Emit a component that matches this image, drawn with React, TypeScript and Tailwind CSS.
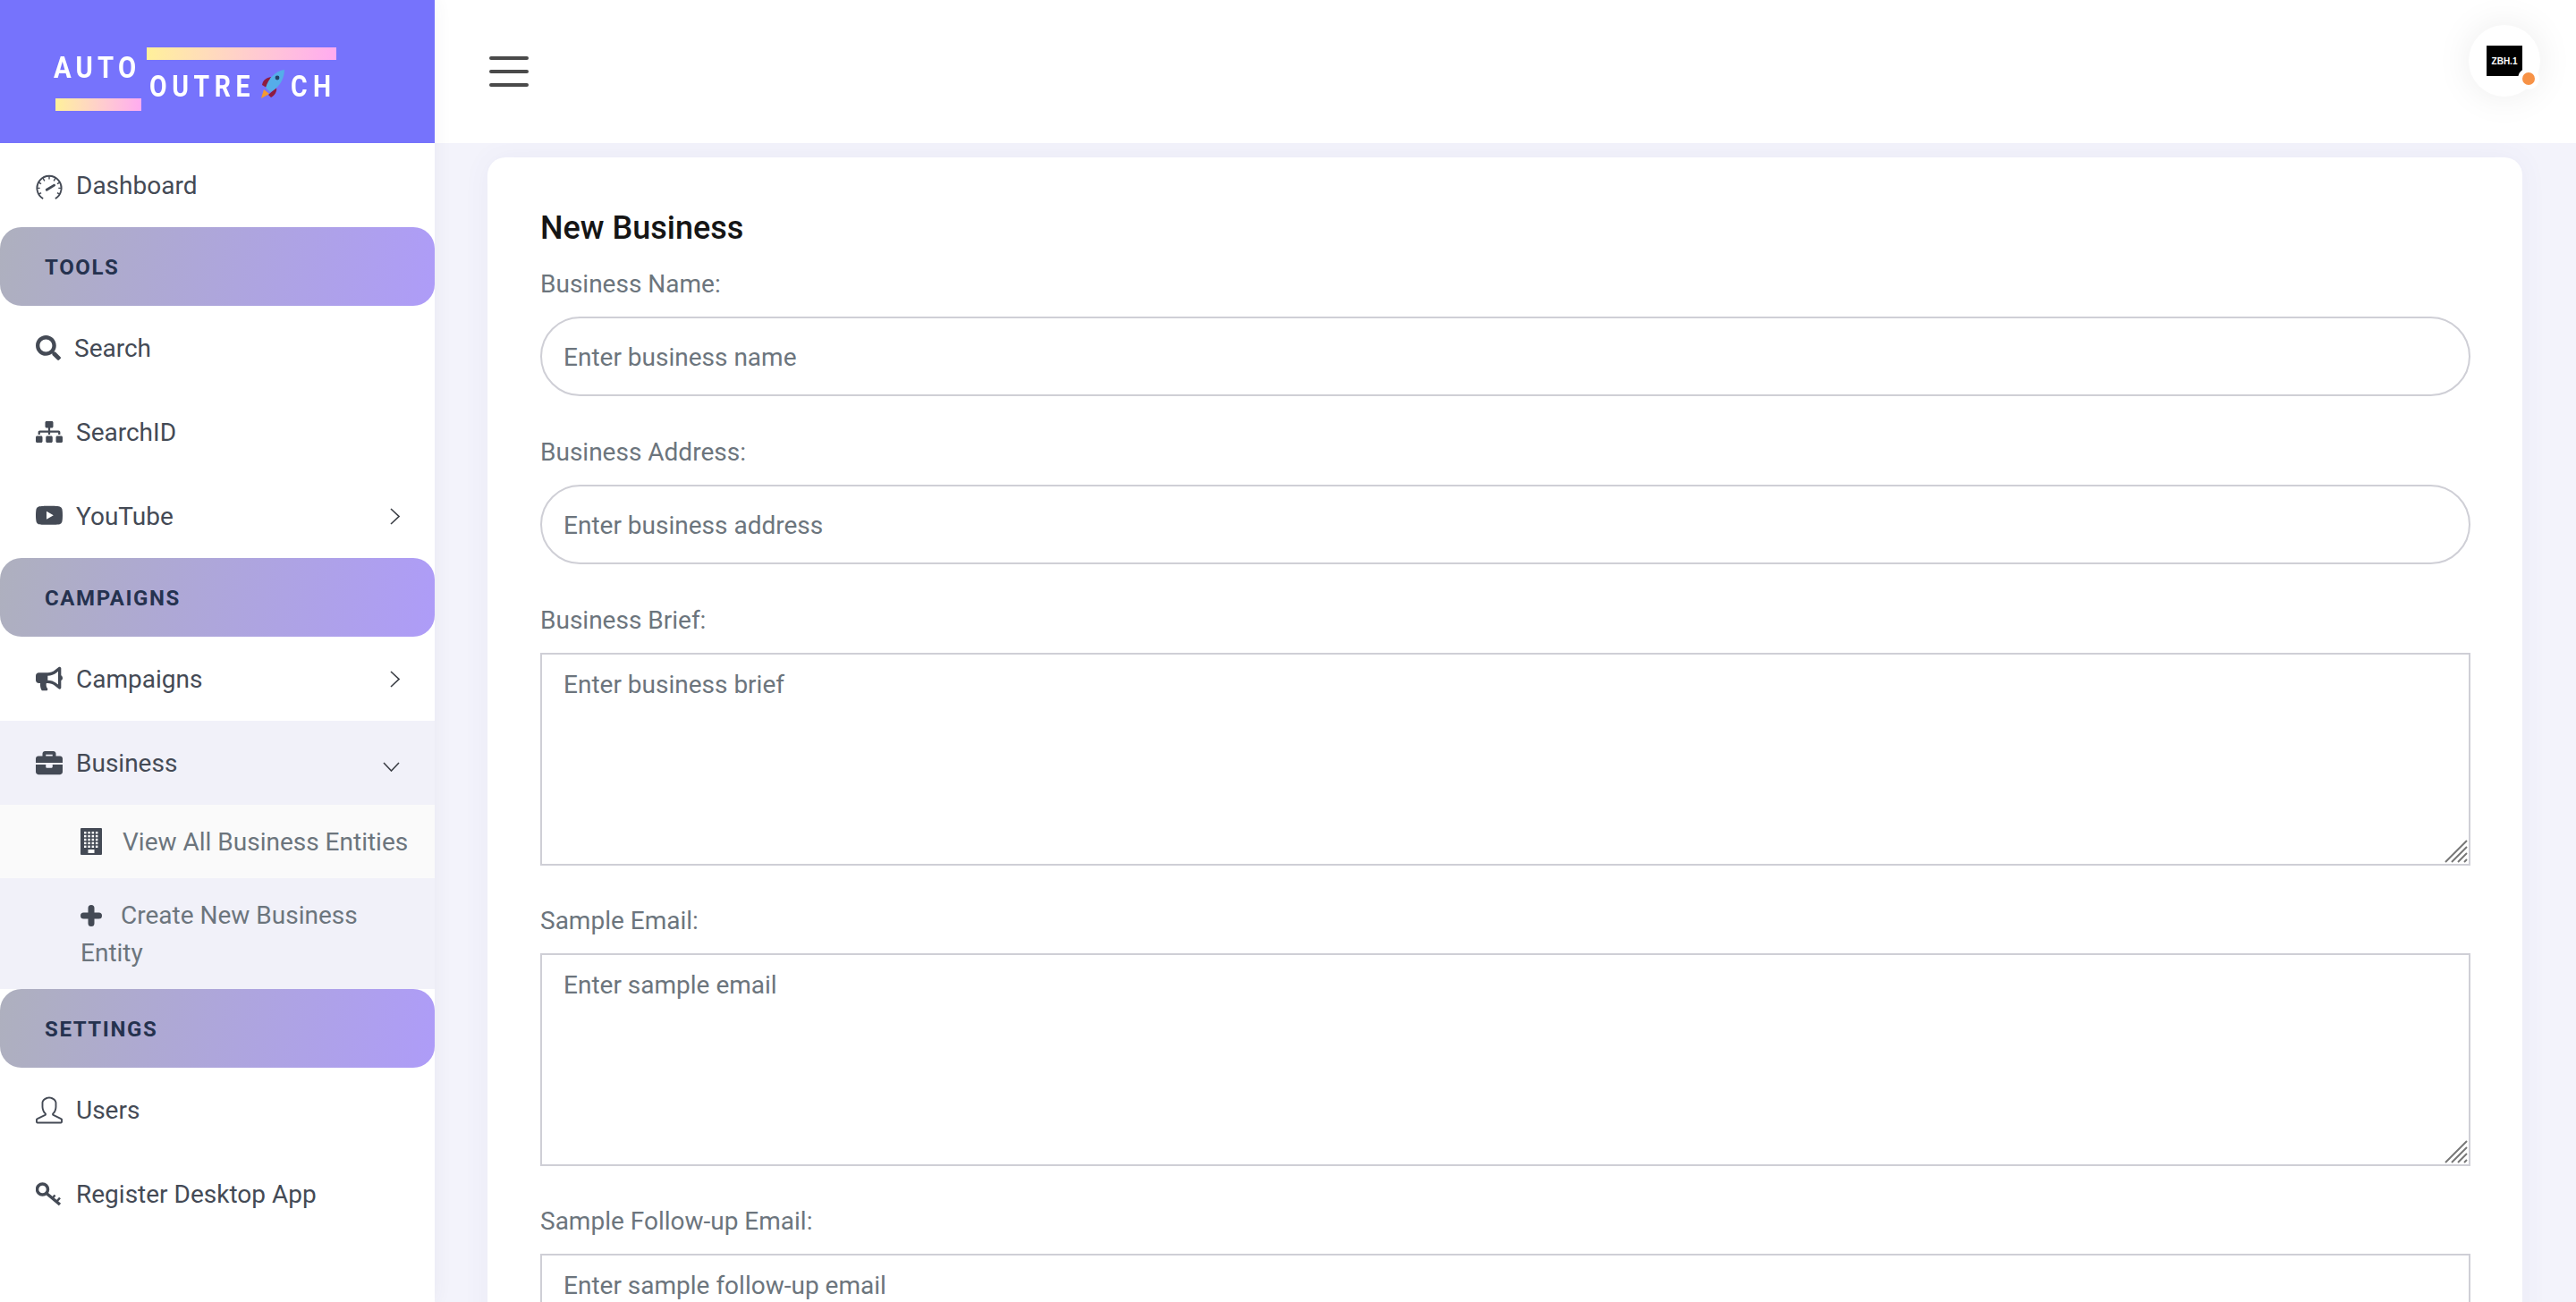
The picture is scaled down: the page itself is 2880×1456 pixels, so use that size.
import React from "react";
import { FaSearch, FaSitemap, FaBullhorn, FaBriefcase } from "react-icons/fa";
import { BsYoutube } from "react-icons/bs";
import { SlUser } from "react-icons/sl";

const font = "font-['Roboto','Liberation_Sans',sans-serif]";

function Band({ label }: { label: string }) {
  return (
    <div className="h-[88px] shrink-0 rounded-[24px] bg-[linear-gradient(100deg,#aeb0be,#ae9cf8)] flex items-center pl-[50px] pt-[2px] text-[24px] font-bold tracking-[1.6px] text-[#25324f]">
      {label}
    </div>
  );
}

function ChevronRight() {
  return (
    <svg width="11" height="19" viewBox="0 0 11 19" fill="none" stroke="#3c3f46" strokeWidth="1.6" className="shrink-0">
      <path d="M1 1 L10 9.5 L1 18" />
    </svg>
  );
}

function ChevronDown() {
  return (
    <svg width="19" height="11" viewBox="0 0 19 11" fill="none" stroke="#3c3f46" strokeWidth="1.6" className="shrink-0 mt-[9px]">
      <path d="M1 1 L9.5 10 L18 1" />
    </svg>
  );
}

function Item({ icon, label, chevron, active, gap = "gap-[15px]" }: { icon: React.ReactNode; label: string; chevron?: "right" | "down"; active?: boolean; gap?: string }) {
  return (
    <div className={`h-[94px] shrink-0 flex items-center pl-[40px] pr-[39px] text-[28px] text-[#444a55] ${gap} ${active ? "bg-[#f1f1f9]" : ""}`}>
      <span className="w-[30px] flex justify-start shrink-0">{icon}</span>
      <span className="flex-1 pt-[1px]">{label}</span>
      {chevron === "right" && <ChevronRight />}
      {chevron === "down" && <ChevronDown />}
    </div>
  );
}

function Gauge() {
  return (
    <svg width="32" height="28" viewBox="0 0 32 28" fill="none" stroke="#444a55" className="mt-[4px]">
      <path d="M8.7 28 A14.5 14.5 0 1 1 23.3 28" strokeWidth="2" />
      <path d="M16 1 V5 M8.5 3.5 L10.5 7 M23.5 3.5 L21.5 7 M3 8.5 L6.5 10.5 M29 8.5 L25.5 10.5 M1 15.5 H5 M27 15.5 H31 M3 23 L6.5 21 M29 23 L25.5 21" strokeWidth="1.5" />
      <path d="M13 17.5 L22 12" strokeWidth="3" strokeLinecap="round" />
    </svg>
  );
}

function KeyIcon() {
  return (
    <svg width="30" height="28" viewBox="0 0 30 28" fill="none" stroke="#444a55">
      <circle cx="7.5" cy="9" r="6" strokeWidth="3.5" />
      <path d="M12 13.5 L27 26" strokeWidth="3.5" />
      <path d="M18.5 19 L21.5 15.5 M23 23 L27 18.5" strokeWidth="2.5" />
    </svg>
  );
}

function BuildingIcon() {
  const dots: React.ReactNode[] = [];
  for (let r = 0; r < 5; r++) {
    for (let c = 0; c < 4; c++) {
      dots.push(<rect key={`${r}-${c}`} x={4 + c * 4.3} y={4 + r * 3.9} width="2.5" height="2.4" fill="#fff" />);
    }
  }
  return (
    <svg width="24" height="30" viewBox="0 0 24 30" className="shrink-0">
      <rect width="24" height="30" rx="1" fill="#444a55" />
      {dots}
      <rect x="8.5" y="24" width="7" height="4" fill="#fff" />
    </svg>
  );
}

function PlusIcon() {
  return (
    <svg width="24" height="24" viewBox="0 0 24 24" stroke="#444a55" strokeWidth="7" strokeLinecap="round" className="inline-block mr-[21px] align-[-3px]">
      <path d="M12 3.5 V20.5 M3.5 12 H20.5" />
    </svg>
  );
}

function Rocket() {
  return (
    <svg width="26" height="32" viewBox="0 0 26 32" className="absolute left-[292px] top-[78px]">
      <path d="M0 32 L3 22 L9 27 Z" fill="#f59a2e" />
      <path d="M1 17 C2 11 6 9 11 8 L6 20 Z" fill="#8e1b3f" />
      <path d="M8 28 L17 20 C18 24 15 29 11 31 Z" fill="#8e1b3f" />
      <path d="M26 0 C16 1 8 10 5 20 L10 25 C19 21 26 11 26 0 Z" fill="#55ade9" />
      <circle cx="18" cy="9" r="2.4" fill="#24406a" />
    </svg>
  );
}

function ResizeHandle() {
  return (
    <svg width="26" height="26" viewBox="0 0 26 26" stroke="#777" strokeWidth="2" className="absolute right-[3px] bottom-[3px] pointer-events-none">
      <path d="M1 25 L25 1 M8 25 L25 8 M15 25 L25 15 M22 25 L25 22" />
    </svg>
  );
}

function Label({ children }: { children: React.ReactNode }) {
  return <label className="block text-[28px] leading-[38px] text-[#6c757d]">{children}</label>;
}

function Pill({ placeholder }: { placeholder: string }) {
  return <input placeholder={placeholder} className="block w-full h-[89px] rounded-full border-2 border-[#cfcfd6] px-[24px] pt-[1px] text-[28px] mt-[17px] mb-[44px] placeholder:text-[#6c757d] outline-none" />;
}

function Area({ placeholder }: { placeholder: string }) {
  return (
    <div className="relative mt-[17px] mb-[43px]">
      <textarea placeholder={placeholder} className="block w-full h-[238px] resize-none border-2 border-[#cfcfd6] px-[24px] py-[17px] text-[28px] leading-[34px] placeholder:text-[#6c757d] outline-none" />
      <ResizeHandle />
    </div>
  );
}

export default function App() {
  return (
    <div className={`h-screen w-full flex overflow-hidden bg-[#f3f3fb] ${font}`}>
      <aside className="w-[486px] shrink-0 h-full flex flex-col bg-white overflow-hidden relative z-10 shadow-[0_0_20px_rgba(60,60,90,0.06)]">
        <div className="h-[160px] shrink-0 bg-[#7673fc] relative">
          <span className="absolute left-[60px] top-[56px] origin-left scale-x-[0.86] text-[34px] leading-[38px] font-bold tracking-[6px] text-white blur-[0.4px]">AUTO</span>
          <span className="absolute left-[167px] top-[78px] origin-left scale-x-[0.86] text-[33px] leading-[38px] font-bold tracking-[6.5px] text-white blur-[0.4px]">OUTRE</span>
          <span className="absolute left-[325px] top-[78px] origin-left scale-x-[0.86] text-[33px] leading-[38px] font-bold tracking-[7.5px] text-white blur-[0.4px]">CH</span>
          <div className="absolute left-[164px] top-[53px] w-[212px] h-[14px] bg-gradient-to-r from-[#fff09a] to-[#ffabf0]" />
          <div className="absolute left-[62px] top-[110px] w-[96px] h-[14px] bg-gradient-to-r from-[#fff09a] to-[#ffabf0]" />
          <Rocket />
        </div>
        <Item icon={<Gauge />} label="Dashboard" gap="gap-[15px]" />
        <Band label="TOOLS" />
        <Item icon={<FaSearch size={28} />} label="Search" gap="gap-[13px]" />
        <Item icon={<FaSitemap size={30} />} label="SearchID" />
        <Item icon={<BsYoutube size={30} />} label="YouTube" chevron="right" />
        <Band label="CAMPAIGNS" />
        <Item icon={<FaBullhorn size={30} />} label="Campaigns" chevron="right" />
        <Item icon={<FaBriefcase size={30} />} label="Business" chevron="down" active />
        <div className="bg-[#f1f1f9] text-[#6c757d] text-[28px]">
          <div className="h-[82px] flex items-center pl-[90px] bg-[#fafafa] gap-[23px]">
            <BuildingIcon />
            <span className="pt-[1px]">View All Business Entities</span>
          </div>
          <div className="h-[124px] pl-[90px] pr-[20px] pt-[21px] leading-[42px]">
            <PlusIcon />
            Create New Business Entity
          </div>
        </div>
        <Band label="SETTINGS" />
        <Item icon={<SlUser size={31} />} label="Users" />
        <Item icon={<KeyIcon />} label="Register Desktop App" />
      </aside>
      <div className="flex-1 min-w-0 h-full flex flex-col">
        <header className="h-[160px] shrink-0 bg-white flex justify-between pl-[61px] pr-[40px]">
          <div className="flex flex-col justify-center gap-[11px] w-[44px]">
            <div className="h-[4px] rounded-full bg-[#4a4a4a]" />
            <div className="h-[4px] rounded-full bg-[#4a4a4a]" />
            <div className="h-[4px] rounded-full bg-[#4a4a4a]" />
          </div>
          <div className="relative w-[80px] h-[80px] mt-[28px] rounded-full bg-white shadow-[0_0_40px_rgba(0,0,0,0.08)] flex items-center justify-center">
            <div className="w-[40px] h-[34px] bg-black text-white text-[10px] font-bold flex items-center justify-center font-['Liberation_Sans',sans-serif]">ZBH.1</div>
            <div className="absolute left-[60px] top-[53px] w-[14px] h-[14px] rounded-full bg-[#f79246] ring-[5px] ring-white" />
          </div>
        </header>
        <main className="flex-1 min-h-0 overflow-hidden pl-[59px] pr-[60px] pt-[16px]">
          <div className="bg-white rounded-t-[20px] pl-[59px] pr-[58px] pt-[58px] h-[1400px] shadow-[0_0_30px_rgba(80,80,170,0.06)]">
            <h2 className="text-[36px] leading-[42px] font-medium text-[#151515] mb-[23px]">New Business</h2>
            <Label>Business Name:</Label>
            <Pill placeholder="Enter business name" />
            <Label>Business Address:</Label>
            <Pill placeholder="Enter business address" />
            <Label>Business Brief:</Label>
            <Area placeholder="Enter business brief" />
            <Label>Sample Email:</Label>
            <Area placeholder="Enter sample email" />
            <Label>Sample Follow-up Email:</Label>
            <Area placeholder="Enter sample follow-up email" />
          </div>
        </main>
      </div>
    </div>
  );
}
